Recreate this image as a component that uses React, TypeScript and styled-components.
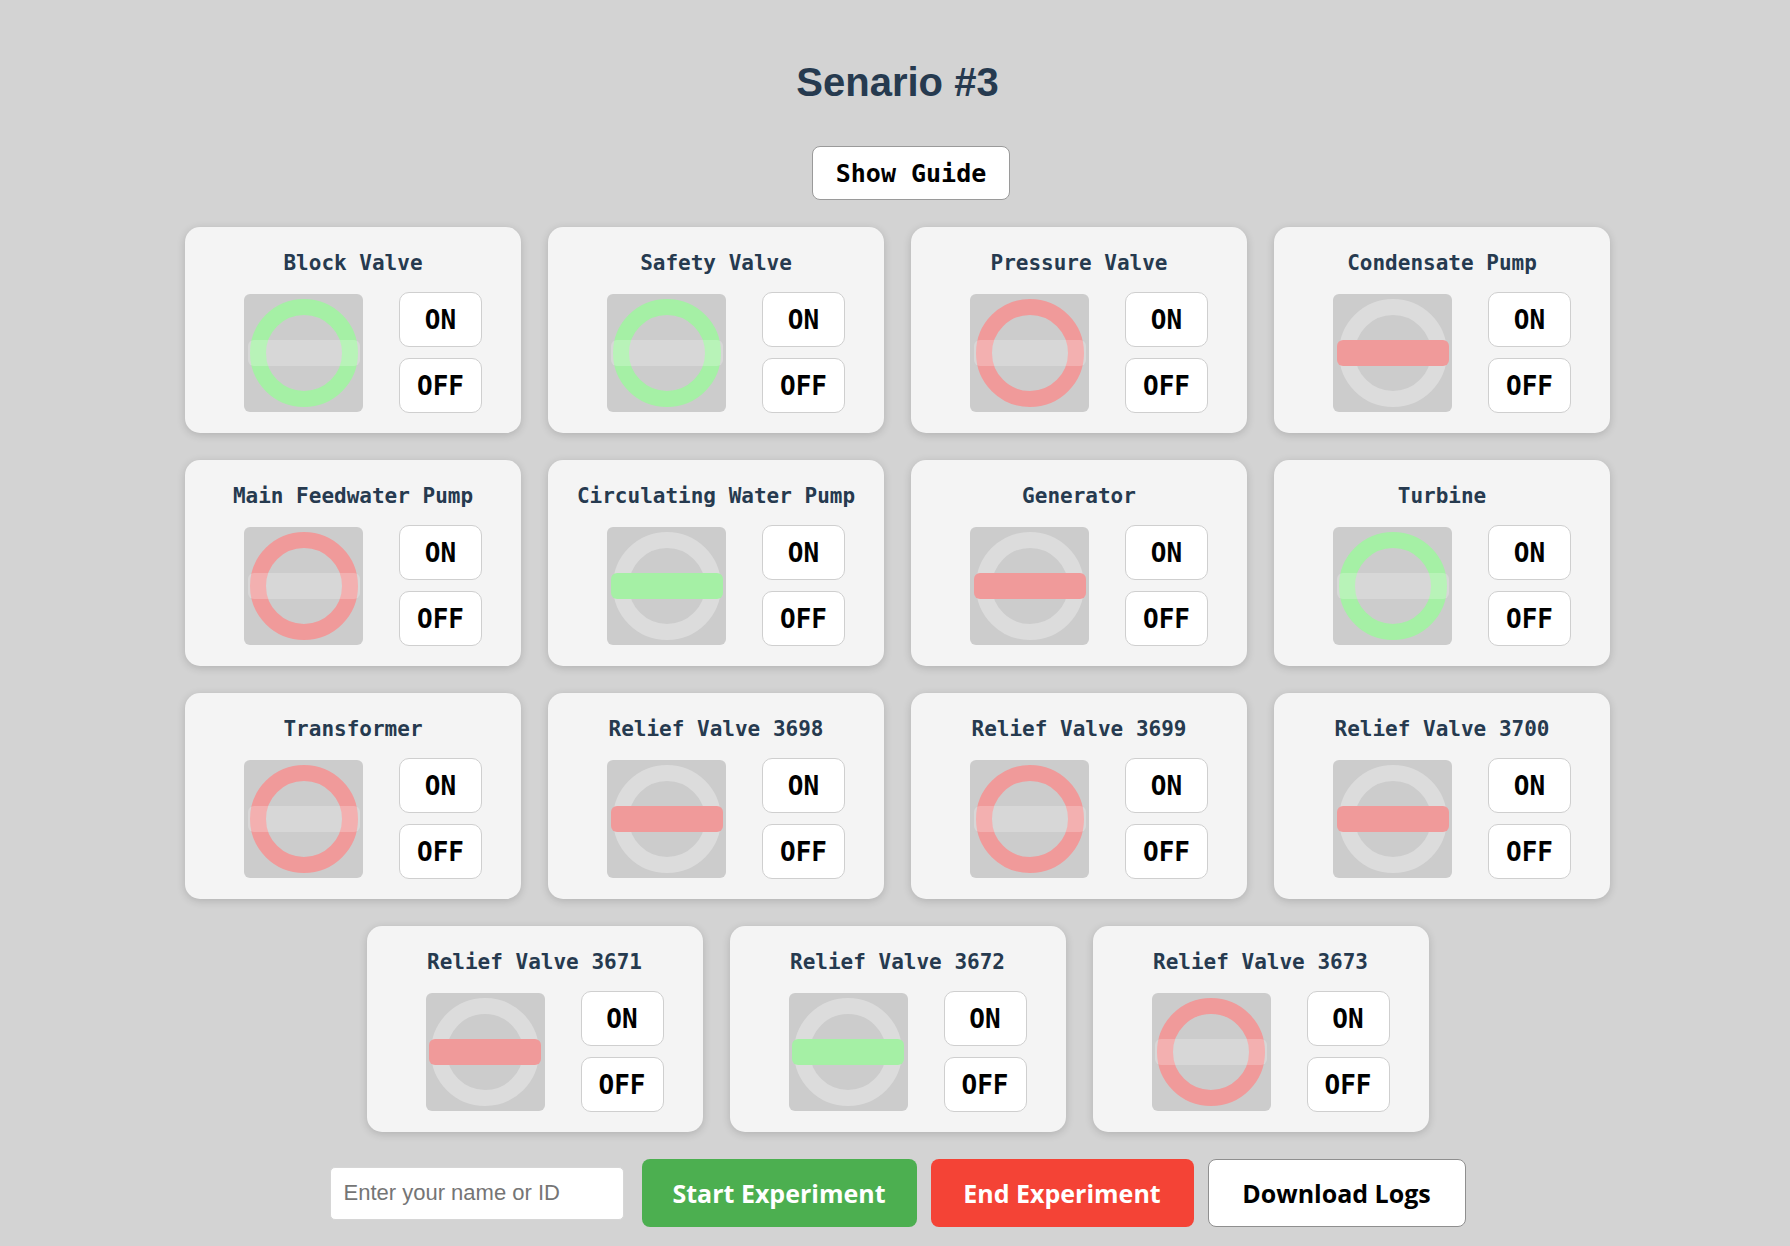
import React, { FC } from "react";
import styled, { createGlobalStyle } from "styled-components";

type Mode = "ring" | "bar";
type Tone = "green" | "red";

type Unit = {
  name: string;
  mode: Mode;
  tone: Tone;
};

const units: Unit[] = [
  { name: "Block Valve", mode: "ring", tone: "green" },
  { name: "Safety Valve", mode: "ring", tone: "green" },
  { name: "Pressure Valve", mode: "ring", tone: "red" },
  { name: "Condensate Pump", mode: "bar", tone: "red" },
  { name: "Main Feedwater Pump", mode: "ring", tone: "red" },
  { name: "Circulating Water Pump", mode: "bar", tone: "green" },
  { name: "Generator", mode: "bar", tone: "red" },
  { name: "Turbine", mode: "ring", tone: "green" },
  { name: "Transformer", mode: "ring", tone: "red" },
  { name: "Relief Valve 3698", mode: "bar", tone: "red" },
  { name: "Relief Valve 3699", mode: "ring", tone: "red" },
  { name: "Relief Valve 3700", mode: "bar", tone: "red" },
  { name: "Relief Valve 3671", mode: "bar", tone: "red" },
  { name: "Relief Valve 3672", mode: "bar", tone: "green" },
  { name: "Relief Valve 3673", mode: "ring", tone: "red" },
];

const toneColor: Record<Tone, string> = {
  green: "#a5f0a5",
  red: "#f09a9a",
};

const GlobalStyle = createGlobalStyle`
  html, body {
    margin: 0;
    padding: 0;
    background: #d3d3d3;
  }
  * {
    box-sizing: border-box;
  }
`;

const UnitCard: FC<{ unit: Unit }> = ({ unit }) => (
  <Card>
    <CardTitle>{unit.name}</CardTitle>
    <CardBody>
      <SwitchBox>
        <Ring $color={unit.mode === "ring" ? toneColor[unit.tone] : "#dcdcdc"} />
        <Bar
          $color={
            unit.mode === "bar"
              ? toneColor[unit.tone]
              : "rgba(255, 255, 255, 0.22)"
          }
        />
      </SwitchBox>
      <ButtonStack>
        <ToggleButton>ON</ToggleButton>
        <ToggleButton>OFF</ToggleButton>
      </ButtonStack>
    </CardBody>
  </Card>
);

const App: FC = () => (
  <>
    <GlobalStyle />
    <Page>
      <Title>Senario #3</Title>
      <GuideButton>Show Guide</GuideButton>
      <CardGrid>
        {units.map((u) => (
          <UnitCard key={u.name} unit={u} />
        ))}
      </CardGrid>
      <ActionBar>
        <NameInput placeholder="Enter your name or ID" />
        <ActionButton $variant="start">Start Experiment</ActionButton>
        <ActionButton $variant="end">End Experiment</ActionButton>
        <ActionButton $variant="plain">Download Logs</ActionButton>
      </ActionBar>
    </Page>
  </>
);

export default App;

const Page = styled.div`
  width: 100%;
  padding: 59px 0 10px 5px;
  display: flex;
  flex-direction: column;
  align-items: center;
`;

const Title = styled.h1`
  margin: 0;
  font-family: "Liberation Sans", Arial, sans-serif;
  font-size: 40px;
  line-height: 46px;
  font-weight: 700;
  color: #263a4f;
`;

const GuideButton = styled.button`
  margin: 41px 0 0 27px;
  width: 198px;
  height: 54px;
  background: #fff;
  border: 1px solid #9a9a9a;
  border-radius: 8px;
  font-family: "DejaVu Sans Mono", monospace;
  font-weight: 700;
  font-size: 25px;
  color: #000;
  cursor: pointer;
`;

const CardGrid = styled.div`
  margin-top: 27px;
  width: 1425px;
  display: flex;
  flex-wrap: wrap;
  justify-content: center;
  gap: 27px;
`;

const Card = styled.div`
  width: 336px;
  height: 206px;
  padding: 24px 0 20px;
  background: #f4f4f4;
  border-radius: 15px;
  box-shadow: 0 2px 8px rgba(0, 0, 0, 0.16);
  display: flex;
  flex-direction: column;
  align-items: center;
`;

const CardTitle = styled.div`
  font-family: "DejaVu Sans Mono", monospace;
  font-weight: 700;
  font-size: 21px;
  line-height: 24px;
  color: #263a4f;
  white-space: nowrap;
`;

const CardBody = styled.div`
  margin-top: 17px;
  width: 100%;
  padding-left: 20px;
  display: flex;
  justify-content: center;
  align-items: center;
  gap: 36px;
`;

const SwitchBox = styled.div`
  width: 119px;
  height: 118px;
  background: #cccccc;
  border-radius: 6px;
  display: grid;
  place-items: center;
`;

const Ring = styled.div<{ $color: string }>`
  grid-area: 1 / 1;
  width: 108px;
  height: 108px;
  border-radius: 50%;
  border: 16px solid ${(p) => p.$color};
`;

const Bar = styled.div<{ $color: string }>`
  grid-area: 1 / 1;
  width: 112px;
  height: 26px;
  border-radius: 6px;
  background: ${(p) => p.$color};
`;

const ButtonStack = styled.div`
  display: flex;
  flex-direction: column;
  gap: 11px;
`;

const ToggleButton = styled.button`
  width: 83px;
  height: 55px;
  background: #fff;
  border: 1px solid #cfcfcf;
  border-radius: 10px;
  font-family: "DejaVu Sans Mono", monospace;
  font-weight: 700;
  font-size: 26px;
  color: #000;
  padding: 0;
  cursor: pointer;
`;

const ActionBar = styled.div`
  margin-top: 27px;
  display: flex;
  align-items: center;
  gap: 14px;
`;

const NameInput = styled.input`
  width: 294px;
  height: 53px;
  margin-right: 4px;
  padding: 0 13px;
  border: 1px solid #d6d6d6;
  border-radius: 5px;
  background: #fff;
  font-family: "Liberation Sans", Arial, sans-serif;
  font-size: 22px;
  color: #222;
  &::placeholder {
    color: #757575;
  }
`;

const variants = {
  start: { bg: "#4caf50", fg: "#fff", border: "none", width: 275 },
  end: { bg: "#f44336", fg: "#fff", border: "none", width: 263 },
  plain: { bg: "#fff", fg: "#000", border: "1px solid #8f8f8f", width: 258 },
};

const ActionButton = styled.button<{ $variant: keyof typeof variants }>`
  width: ${(p) => variants[p.$variant].width}px;
  height: 68px;
  background: ${(p) => variants[p.$variant].bg};
  color: ${(p) => variants[p.$variant].fg};
  border: ${(p) => variants[p.$variant].border};
  border-radius: 8px;
  font-family: "Open Sans", sans-serif;
  font-weight: 700;
  font-size: 25px;
  cursor: pointer;
`;
